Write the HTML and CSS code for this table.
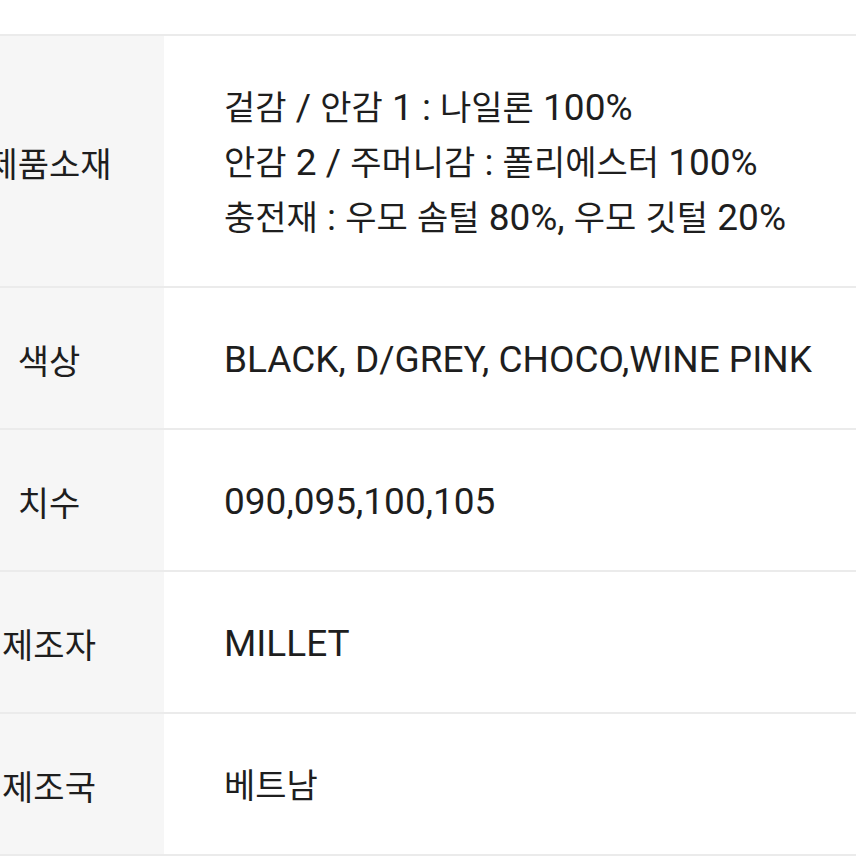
FILE: index.html
```html
<!DOCTYPE html>
<html lang="ko">
<head>
<meta charset="utf-8">
<link rel="stylesheet" href="styles.css">
</head>
<body>
<div class="spec">
  <div class="row">
    <div class="label"><span class="ko">제품소재</span></div>
    <div class="value">
      <div><span class="ko">겉감</span> / <span class="ko">안감</span> 1 : <span class="ko">나일론</span> 100%</div>
      <div><span class="ko">안감</span> 2 / <span class="ko">주머니감</span> : <span class="ko">폴리에스터</span> 100%</div>
      <div><span class="ko">충전재</span> : <span class="ko">우모</span> <span class="ko">솜털</span> 80%, <span class="ko">우모</span> <span class="ko">깃털</span> 20%</div>
    </div>
  </div>
  <div class="row">
    <div class="label"><span class="ko">색상</span></div>
    <div class="value"><div>BLACK, D/GREY, CHOCO,WINE PINK</div></div>
  </div>
  <div class="row">
    <div class="label"><span class="ko">치수</span></div>
    <div class="value"><div>090,095,100,105</div></div>
  </div>
  <div class="row">
    <div class="label"><span class="ko">제조자</span></div>
    <div class="value"><div>MILLET</div></div>
  </div>
  <div class="row">
    <div class="label"><span class="ko">제조국</span></div>
    <div class="value"><div><span class="ko">베트남</span></div></div>
  </div>
</div>
</body>
</html>
```
FILE: styles.css
```css
html, body {
  margin: 0;
  padding: 0;
  background: #ffffff;
  overflow: hidden;
}
body {
  font-family: Roboto, "Noto Sans CJK KR", sans-serif;
  font-size: 37px;
  color: #1e1e1e;
}
.ko {
  font-family: "Noto Sans CJK KR", sans-serif;
  font-size: 34px;
  line-height: 36px;
}
.spec {
  margin-top: 34px;
  margin-left: -66px;
  border-top: 2px solid #ebebeb;
}
.row {
  display: flex;
  border-bottom: 2px solid #ebebeb;
}
.label {
  width: 230px;
  flex: none;
  background: #f6f6f6;
  display: flex;
  align-items: center;
  justify-content: center;
  padding-top: 3px;
  line-height: 55px;
}
.value {
  flex: 1;
  padding: 44px 0 41px 60px;
  line-height: 55px;
  white-space: nowrap;
}
```
